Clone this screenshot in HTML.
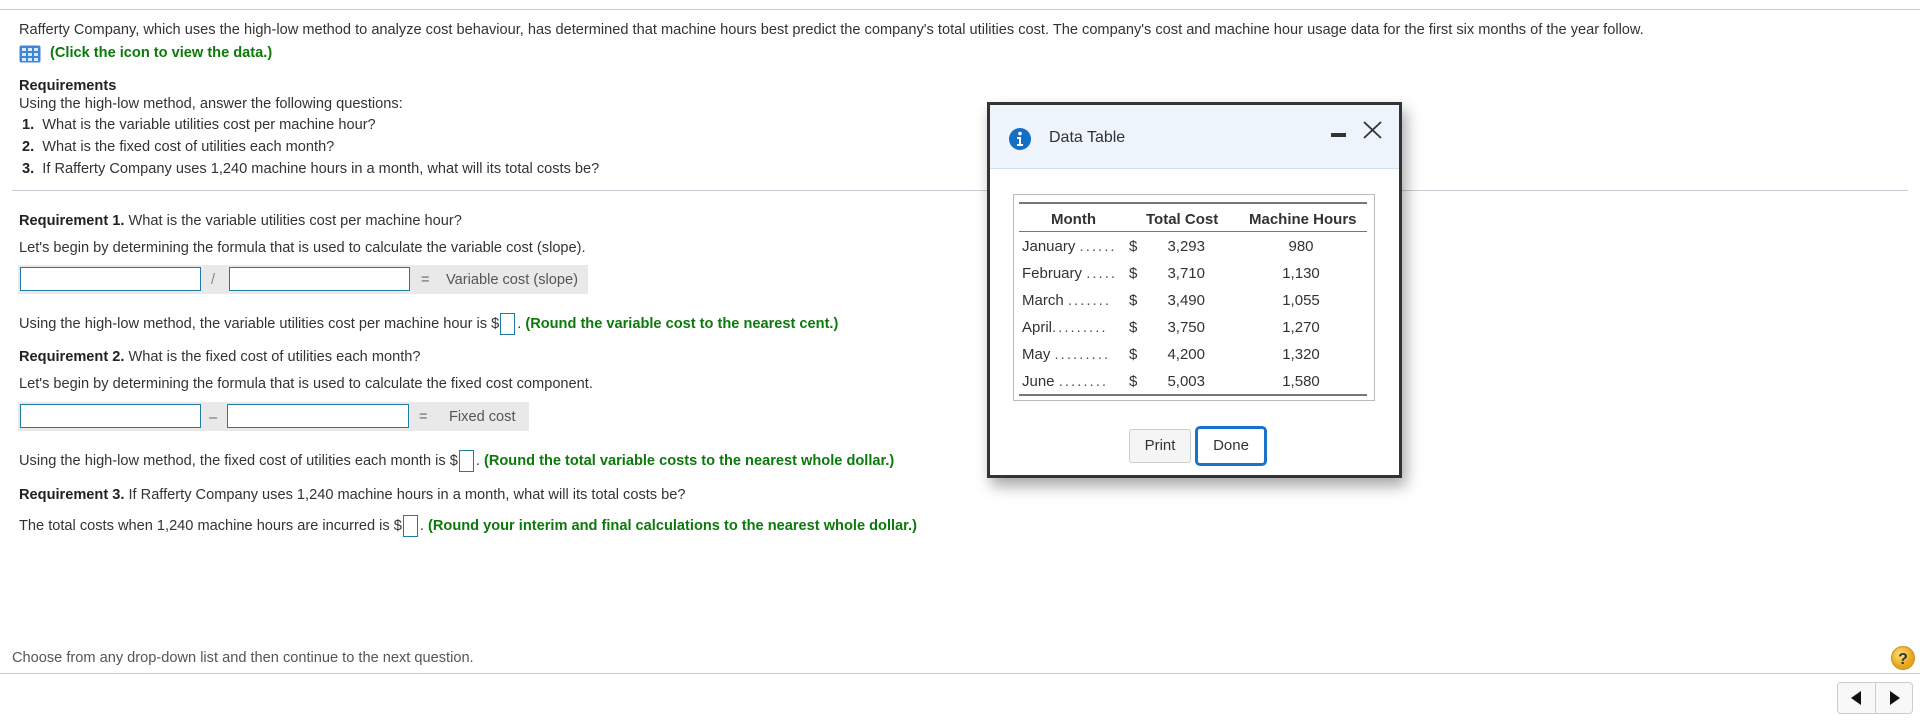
<!DOCTYPE html>
<html><head><meta charset="utf-8"><style>
*{margin:0;padding:0;box-sizing:border-box}
body{width:1920px;height:721px;position:relative;background:#fff;font-family:"Liberation Sans",Arial,sans-serif;font-size:14.6px;color:#333;overflow:hidden}
.a{position:absolute;white-space:nowrap;line-height:18px}
.g{color:#0b7a0b;font-weight:bold}
.b{font-weight:bold;color:#222}
.hr{position:absolute;height:1px;background:#c8ccd4}
.gb{position:absolute;background:#e9e9e9}
.in{position:absolute;border:1.5px solid #1f7ba6;background:#fff}
.sm{display:inline-block;width:15px;height:22px;border:1.3px solid #1f7ba6;vertical-align:middle;margin:0 2px 0 1px}
.modal{position:absolute;left:987px;top:102px;width:415px;height:376px;border:3px solid #333;background:#fff;box-shadow:4px 8px 14px rgba(0,0,0,.35)}
.hd{position:absolute;left:0;top:0;right:0;height:64px;background:#eef4fc;border-bottom:1px solid #cfe0f2}
</style></head><body>
<div class="hr" style="left:0;top:9px;width:1920px"></div>
<div class="a" style="left:19px;top:21px">Rafferty Company, which uses the high-low method to analyze cost behaviour, has determined that machine hours best predict the company's total utilities cost. The company's cost and machine hour usage data for the first six months of the year follow.</div>
<svg class="a" style="left:19px;top:45px" width="23" height="18" viewBox="0 0 23 18"><rect x="0.5" y="0.5" width="21" height="17" rx="2" fill="#3d86d8"/><g fill="#dbe9fa"><rect x="3" y="3" width="4" height="3"/><rect x="9" y="3" width="4" height="3"/><rect x="15" y="3" width="4" height="3"/><rect x="3" y="8" width="4" height="3"/><rect x="9" y="8" width="4" height="3"/><rect x="15" y="8" width="4" height="3"/><rect x="3" y="13" width="4" height="3"/><rect x="9" y="13" width="4" height="3"/><rect x="15" y="13" width="4" height="3"/></g></svg>
<div class="a g" style="left:50px;top:44px">(Click the icon to view the data.)</div>
<div class="a b" style="left:19px;top:77px">Requirements</div>
<div class="a" style="left:19px;top:95px">Using the high-low method, answer the following questions:</div>
<div class="a" style="left:22px;top:116px"><b style="color:#222">1.</b>&nbsp; What is the variable utilities cost per machine hour?</div>
<div class="a" style="left:22px;top:138px"><b style="color:#222">2.</b>&nbsp; What is the fixed cost of utilities each month?</div>
<div class="a" style="left:22px;top:160px"><b style="color:#222">3.</b>&nbsp; If Rafferty Company uses 1,240 machine hours in a month, what will its total costs be?</div>
<div class="hr" style="left:12px;top:190px;width:1896px"></div>

<div class="a" style="left:19px;top:212px"><span class="b">Requirement 1.</span> What is the variable utilities cost per machine hour?</div>
<div class="a" style="left:19px;top:239px">Let's begin by determining the formula that is used to calculate the variable cost (slope).</div>
<div class="gb" style="left:18px;top:265px;width:570px;height:29px"></div>
<div class="in" style="left:20px;top:267px;width:181px;height:24px"></div>
<div class="a" style="left:211px;top:271px;color:#888">/</div>
<div class="in" style="left:229px;top:267px;width:181px;height:24px"></div>
<div class="a" style="left:421px;top:271px;color:#666">=</div>
<div class="a" style="left:446px;top:271px;color:#555">Variable cost (slope)</div>
<div class="a" style="left:19px;top:313px">Using the high-low method, the variable utilities cost per machine hour is $<span class="sm"></span>. <span class="g">(Round the variable cost to the nearest cent.)</span></div>
<div class="a" style="left:19px;top:348px"><span class="b">Requirement 2.</span> What is the fixed cost of utilities each month?</div>
<div class="a" style="left:19px;top:375px">Let's begin by determining the formula that is used to calculate the fixed cost component.</div>
<div class="gb" style="left:18px;top:402px;width:511px;height:29px"></div>
<div class="in" style="left:20px;top:404px;width:181px;height:24px"></div>
<div class="a" style="left:209px;top:409px;color:#666">–</div>
<div class="in" style="left:227px;top:404px;width:182px;height:24px"></div>
<div class="a" style="left:419px;top:408px;color:#666">=</div>
<div class="a" style="left:449px;top:408px;color:#555">Fixed cost</div>
<div class="a" style="left:19px;top:450px">Using the high-low method, the fixed cost of utilities each month is $<span class="sm"></span>. <span class="g">(Round the total variable costs to the nearest whole dollar.)</span></div>
<div class="a" style="left:19px;top:486px"><span class="b">Requirement 3.</span> If Rafferty Company uses 1,240 machine hours in a month, what will its total costs be?</div>
<div class="a" style="left:19px;top:515px">The total costs when 1,240 machine hours are incurred is $<span class="sm"></span>. <span class="g">(Round your interim and final calculations to the nearest whole dollar.)</span></div>

<div class="a" style="left:12px;top:649px;color:#555">Choose from any drop-down list and then continue to the next question.</div>
<div class="hr" style="left:0;top:673px;width:1920px"></div>
<svg class="a" style="left:1890px;top:645px" width="26" height="26"><defs><radialGradient id="y" cx="40%" cy="35%"><stop offset="0" stop-color="#ffe27a"/><stop offset="1" stop-color="#e6a51e"/></radialGradient></defs><circle cx="13" cy="13" r="11.5" fill="url(#y)" stroke="#c9901a"/><text x="13" y="19" text-anchor="middle" font-family="Liberation Sans" font-weight="bold" font-size="16" fill="#333">?</text></svg>
<div style="position:absolute;left:1837px;top:682px;width:76px;height:32px;border:1px solid #ccc;border-radius:4px;background:#f8f8f8"></div>
<div style="position:absolute;left:1875px;top:683px;width:1px;height:30px;background:#ccc"></div>
<svg class="a" style="left:1849px;top:690px" width="14" height="16"><path d="M12 1 L2 8 L12 15Z" fill="#111"/></svg>
<svg class="a" style="left:1888px;top:690px" width="14" height="16"><path d="M2 1 L12 8 L2 15Z" fill="#111"/></svg>

<div class="modal">
 <div class="hd"></div>
 <svg class="a" style="left:18px;top:22px" width="24" height="24"><circle cx="12" cy="12" r="11" fill="#1570c4"/><circle cx="12" cy="6.5" r="1.8" fill="#fff"/><path d="M9 10h4v7h2v2H9v-2h2v-5H9z" fill="#fff"/></svg>
 <div class="a" style="left:59px;top:24px;font-size:16px;color:#333">Data Table</div>
 <div style="position:absolute;left:341px;top:28px;width:15px;height:4px;background:#333"></div>
 <svg class="a" style="left:372px;top:15px" width="21" height="20"><path d="M2 2L19 18M19 2L2 18" stroke="#333" stroke-width="1.8"/></svg>
 <div style="position:absolute;left:23px;top:89px;width:362px;height:207px;border:1px solid #bbb"></div>
 <div style="position:absolute;left:29px;top:97px;width:348px;height:2px;background:#777"></div>
 <div style="position:absolute;left:29px;top:126px;width:348px;height:1px;background:#777"></div>
 <div style="position:absolute;left:29px;top:289px;width:348px;height:2px;background:#777"></div>
 <div class="a b" style="left:61px;top:106px;font-size:15px;color:#333">Month</div>
 <div class="a b" style="left:156px;top:106px;font-size:15px;color:#333">Total Cost</div>
 <div class="a b" style="left:259px;top:106px;font-size:15px;color:#333">Machine Hours</div>
 <div style="position:absolute;left:32px;top:128px;font-size:15px;line-height:27px;color:#333">
  <div>January <span style="letter-spacing:2px;color:#555">......</span></div>
  <div>February <span style="letter-spacing:2px;color:#555">.....</span></div>
  <div>March <span style="letter-spacing:2px;color:#555">.......</span></div>
  <div>April<span style="letter-spacing:2px;color:#555">.........</span></div>
  <div>May <span style="letter-spacing:2px;color:#555">.........</span></div>
  <div>June <span style="letter-spacing:2px;color:#555">........</span></div>
 </div>
 <div style="position:absolute;left:139px;top:128px;font-size:15px;line-height:27px;color:#333">$<br>$<br>$<br>$<br>$<br>$</div>
 <div style="position:absolute;left:165px;width:50px;top:128px;font-size:15px;line-height:27px;color:#333;text-align:right">3,293<br>3,710<br>3,490<br>3,750<br>4,200<br>5,003</div>
 <div style="position:absolute;left:266px;width:90px;top:128px;font-size:15px;line-height:27px;color:#333;text-align:center">980<br>1,130<br>1,055<br>1,270<br>1,320<br>1,580</div>
 <div style="position:absolute;left:139px;top:324px;width:62px;height:34px;border:1px solid #ccc;border-radius:3px;background:#f5f5f5;font-size:15px;text-align:center;line-height:32px;color:#333">Print</div>
 <div style="position:absolute;left:205px;top:321px;width:72px;height:40px;border:3px solid #1a73c8;border-radius:5px;background:#fff;font-size:15px;text-align:center;line-height:34px;color:#333">Done</div>
</div>
</body></html>
